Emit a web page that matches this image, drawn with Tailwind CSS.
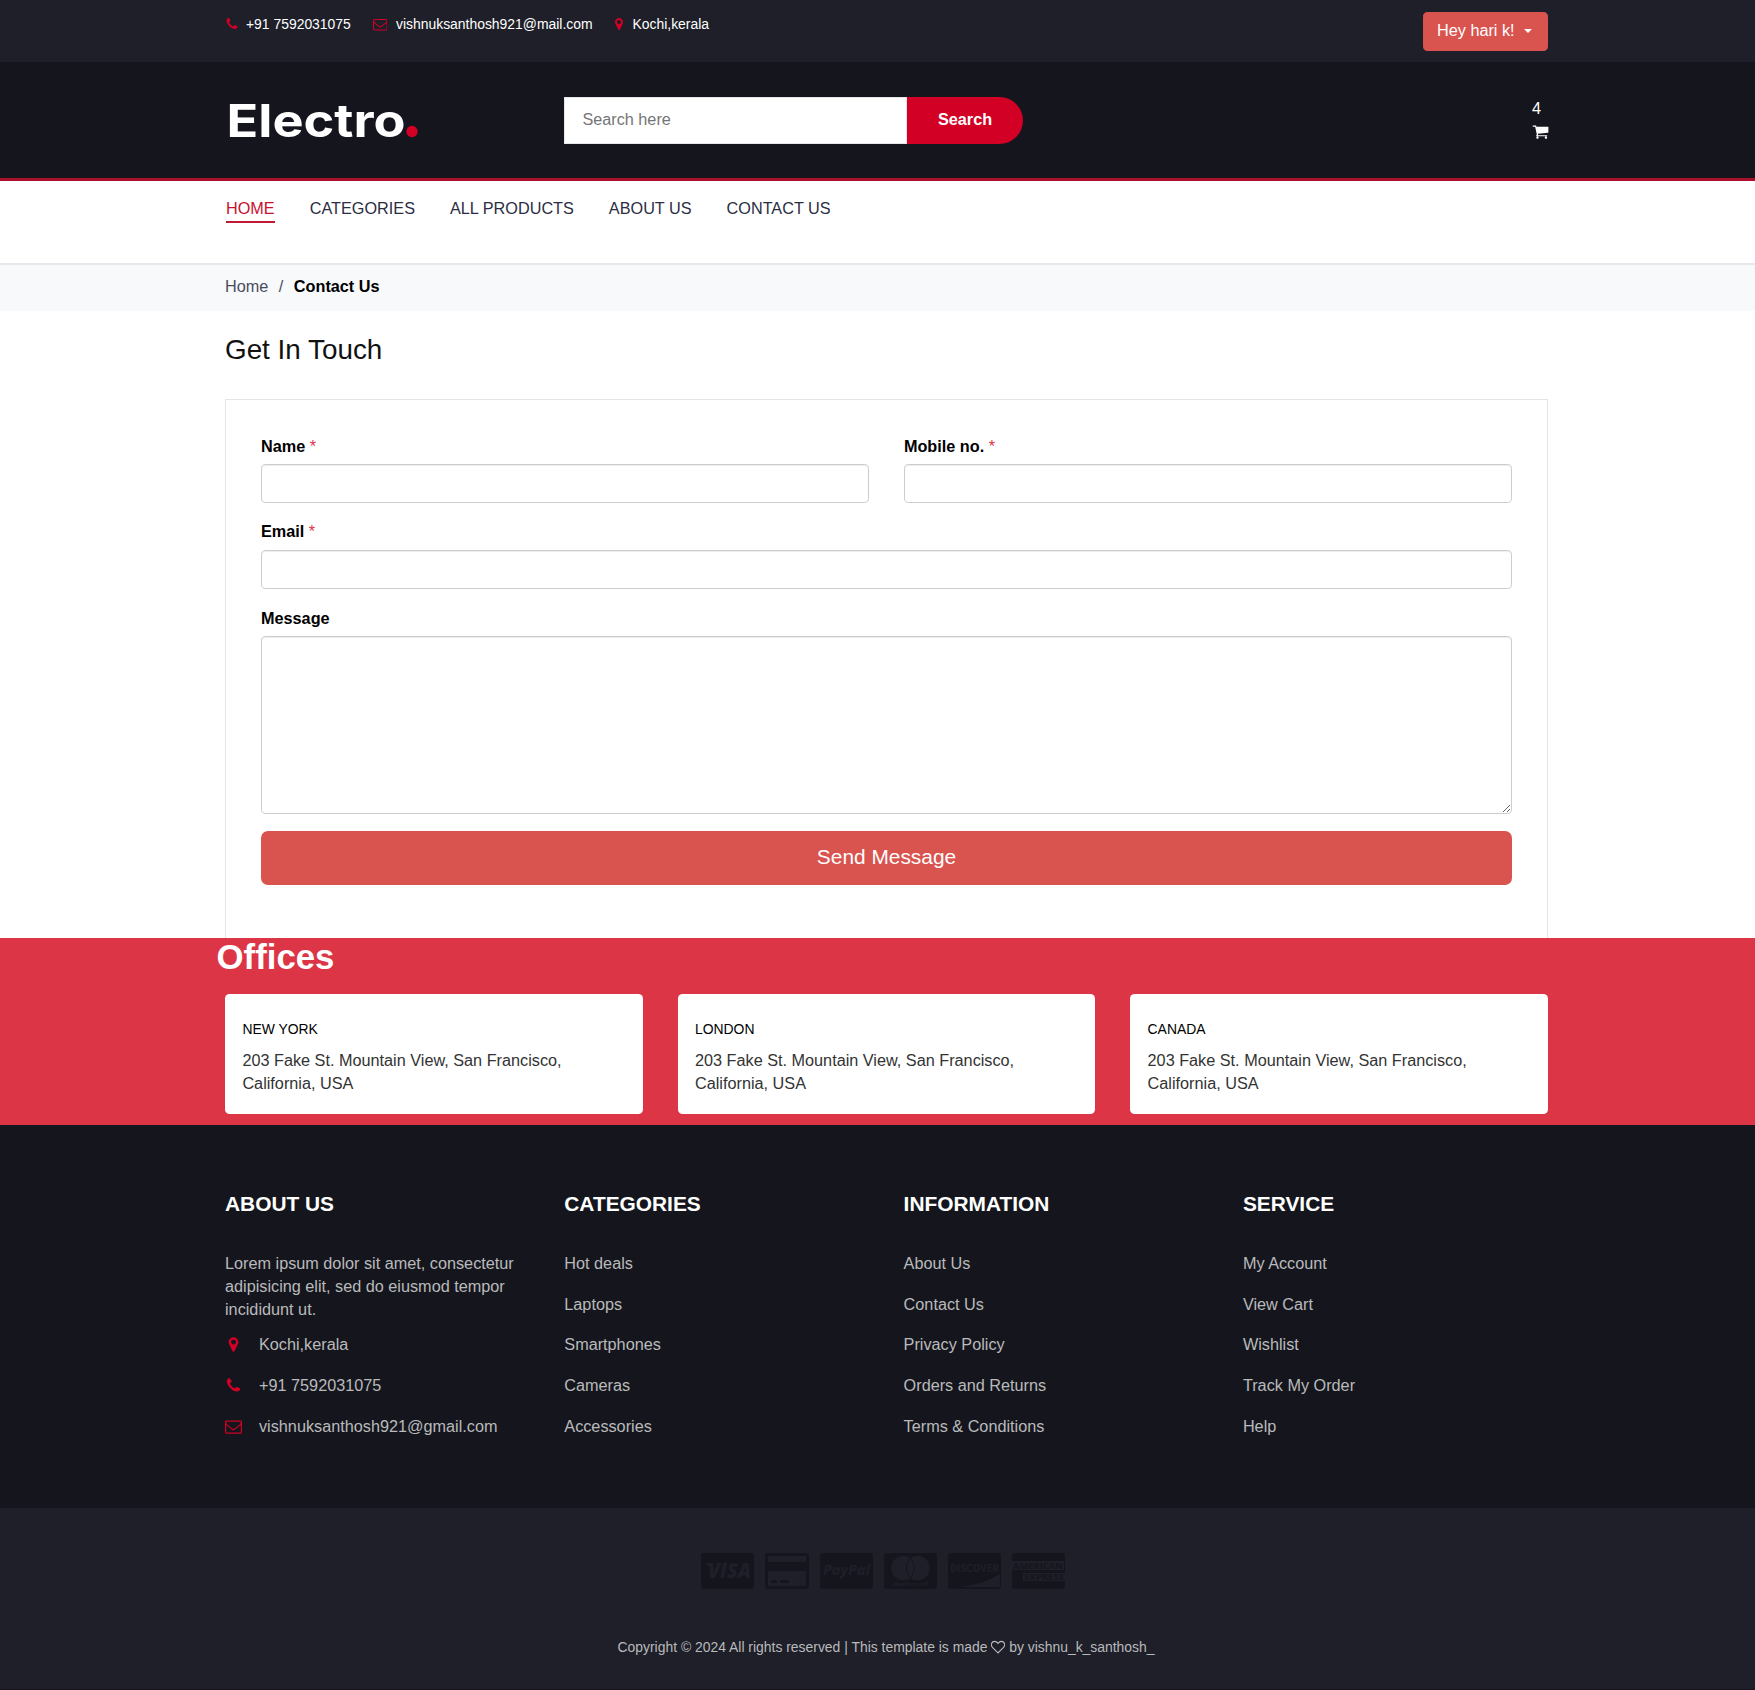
<!DOCTYPE html>
<html lang="en">
<head>
<meta charset="utf-8">
<title>Electro - Contact Us</title>
<script src="https://cdn.jsdelivr.net/npm/@tailwindcss/browser@4"></script>
</head>
<body class="bg-white font-['Liberation_Sans',Arial,sans-serif] text-[16.240px] leading-[23px] text-[#333] w-[1755px] h-[1690px] overflow-hidden">
<svg class="hidden">
  <symbol id="phone" viewBox="0 0 1792 1792"><path d="M1600 1240q0 27-10 70.5t-21 68.5q-21 50-122 106-94 51-186 51-27 0-53-3.5t-57-12.5-47-14.5-55.5-20.5-49.5-18q-98-35-175-83-127-79-264-216t-216-264q-48-77-83-175-3-9-18-49.5t-20.5-55.5-14.5-47-12.5-57-3.5-53q0-92 51-186 56-101 106-122 25-11 68.5-21t70.5-10q14 0 21 3 18 6 53 76 11 19 30 54t35 63.5 31 53.5q3 4 17.5 25t21.5 35.5 7 28.5q0 20-28.5 50t-62 55-62 53-28.5 46q0 9 5 22.5t8.5 20.5 14 24 11.5 19q76 137 174 235t235 174q2 1 19 11.5t24 14 20.5 8.5 22.5 5q18 0 46-28.5t53-62 55-62 50-28.5q14 0 28.5 7t35.5 21.5 25 17.5q25 15 53.5 31t63.5 35 54 30q70 35 76 53 3 7 3 21z"/></symbol>
  <symbol id="pin" viewBox="0 0 1792 1792"><path d="M1152 640q0-106-75-181t-181-75-181 75-75 181 75 181 181 75 181-75 75-181zm256 0q0 109-33 179l-364 774q-16 33-47.5 52t-67.5 19-67.5-19-46.500-52l-365-774q-33-70-33-179 0-212 150-362t362-150 362 150 150 362z"/></symbol>
  <symbol id="mail" viewBox="0 0 1792 1792"><path d="M1664 1504v-768q-32 36-69 66-268 206-426 338-51 43-83 67t-86.500 48.500-102.500 24.500h-2q-48 0-102.500-24.500t-86.500-48.500-83-67q-158-132-426-338-37-30-69-66v768q0 13 9.500 22.500t22.500 9.500h1472q13 0 22.500-9.500t9.500-22.500zm0-1051v-24.500l-.5-13-3-12.500-5.500-9-9-7.500-14-2.500h-1472q-13 0-22.500 9.500t-9.500 22.500q0 168 147 284 193 152 401 317 6 5 35 29.500t46 37.500 44.500 31.500 50.500 27.500 43 9h2q20 0 43-9t50.500-27.500 44.500-31.500 46-37.500 35-29.500q208-165 401-317 54-43 100.500-115.500t46.500-131.500zm128-37v1088q0 66-47 113t-113 47h-1472q-66 0-113-47t-47-113v-1088q0-66 47-113t113-47h1472q66 0 113 47t47 113z"/></symbol>
  <symbol id="cart" viewBox="0 0 1792 1792"><path d="M704 1536q0 52-38 90t-90 38-90-38-38-90 38-90 90-38 90 38 38 90zm896 0q0 52-38 90t-90 38-90-38-38-90 38-90 90-38 90 38 38 90zm128-1088v512q0 24-16.500 42.500t-40.500 21.500l-1044 122q13 60 13 70 0 16-24 64h920q26 0 45 19t19 45-19 45-45 19h-1024q-26 0-45-19t-19-45q0-11 8-31.500t16-36 21.500-40 15.500-29.500l-177-823h-204q-26 0-45-19t-19-45 19-45 45-19h256q16 0 28.500 6.500t19.500 15.500 13 24.500 8 26 5.500 29.500 4.500 26h1201q26 0 45 19t19 45z"/></symbol>
</svg>

<!-- top bar -->
<div class="h-[62px] bg-[#1e1f29] pl-[225px] pr-[207px] flex justify-between items-start">
  <ul class="flex pt-[14px] text-[13.92px] leading-5 text-white">
    <li class="flex items-center w-[147.500px]"><svg class="w-[14px] h-[14px] mr-[7px] -mt-px fill-[#d10024]"><use href="#phone"/></svg>+91 7592031075</li>
    <li class="flex items-center w-[239px]"><svg class="w-[14.500px] h-[14.500px] mr-[9px] fill-[#d10024]"><use href="#mail"/></svg><span>vishnuksanthosh921@mail.com</span></li>
    <li class="flex items-center"><svg class="w-[14px] h-[14px] mr-[7px] fill-[#d10024]"><use href="#pin"/></svg>Kochi,kerala</li>
  </ul>
  <button class="mt-[12px] w-[125px] h-[39px] rounded-[4.600px] bg-[#d9534f] border border-[#d9534f] text-white flex items-center pl-[13px] pb-[3px]">Hey hari k!<span class="ml-[9px] mt-px border-x-[4.600px] border-x-transparent border-t-[4.600px] border-t-white"></span></button>
</div>

<!-- header -->
<header class="h-[116px] bg-[#15161d] pl-[225px] pr-[206px] flex items-start">
  <a class="w-[339px] pt-[28px]">
    <svg width="200" height="60" viewBox="0 0 200 60"><text x="1.500" y="47" font-family="Inter, sans-serif" font-weight="700" font-size="45.500" fill="#fff" textLength="179" lengthAdjust="spacingAndGlyphs">Electro</text><circle cx="187" cy="41.500" r="5.700" fill="#d10024"/></svg>
  </a>
  <form class="flex pt-[35px]">
    <input class="w-[343px] h-[47px] bg-white border border-[#e4e7ed] px-[17.400px] pb-[2px] placeholder:text-[#757575]" placeholder="Search here">
    <button type="button" class="w-[116px] h-[47px] rounded-r-full bg-[#d10024] text-white font-bold pb-[2px]">Search</button>
  </form>
  <div class="ml-auto pt-[33.500px] text-white w-[17px]">
    <div class="h-[27px] leading-[25px]">4</div>
    <svg class="w-[17px] h-[17px] fill-white"><use href="#cart"/></svg>
  </div>
</header>

<!-- navigation -->
<nav class="h-[84.500px] border-t-[3px] border-[#a8102b] px-[226px] flex gap-[35px] pt-[16px] text-[#2b2d42]">
  <a class="h-[26px] text-[#c8102e] border-b-2 border-[#c01a37]">HOME</a>
  <a>CATEGORIES</a><a>ALL PRODUCTS</a><a>ABOUT US</a><a>CONTACT US</a>
</nav>

<!-- breadcrumb -->
<div class="h-[48.500px] border-t-2 border-[#e6e8ed] bg-[#f7f9fb] px-[225px] pt-[10.500px] flex">
  <span class="text-[#4a4c5c]">Home</span><span class="pl-[10.500px] pr-[10.500px] text-[#4a4c5c]">/</span><span class="font-bold text-black">Contact Us</span>
</div>

<!-- contact form -->
<main class="px-[225px] h-[627px] pr-[207px]">
  <h3 class="pt-[23px] h-[88px] text-[27.840px] leading-[31px] text-[#111]">Get In Touch</h3>
  <form class="h-[540px] border border-[#e3e5e7] p-[35px] pt-[35px]">
    <div class="grid grid-cols-2 gap-x-[34.800px]">
      <label class="block h-[85.400px] font-bold text-black">Name <span class="font-normal text-[#dc3545]">*</span><input class="block mt-[6px] w-full h-[39.400px] rounded-[4.600px] border border-[#ccc] shadow-[inset_0_1px_1px_rgba(0,0,0,0.075)]"></label>
      <label class="block h-[85.400px] font-bold text-black">Mobile no. <span class="font-normal text-[#dc3545]">*</span><input class="block mt-[6px] w-full h-[39.400px] rounded-[4.600px] border border-[#ccc] shadow-[inset_0_1px_1px_rgba(0,0,0,0.075)]"></label>
    </div>
    <label class="block h-[86.600px] font-bold text-black">Email <span class="font-normal text-[#dc3545]">*</span><input class="block mt-[6.200px] w-full h-[39.800px] rounded-[4.600px] border border-[#ccc] shadow-[inset_0_1px_1px_rgba(0,0,0,0.075)]"></label>
    <label class="block font-bold text-black">Message<textarea class="block mt-[6px] w-full h-[178px] rounded-[4.600px] border border-[#ccc] shadow-[inset_0_1px_1px_rgba(0,0,0,0.075)]"></textarea></label>
    <button type="button" class="block mt-[17.500px] w-full h-[53.500px] rounded-[7px] bg-[#d9534f] text-white text-[20.880px] pb-[3px]">Send Message</button>
  </form>
</main>

<!-- offices -->
<section class="h-[186.500px] bg-[#dc3545] pl-[225px] pr-[207px]">
  <h2 class="-ml-[8.500px] h-[55.500px] text-[34.800px] leading-[37px] font-bold text-white">Offices</h2>
  <div class="grid grid-cols-3 gap-[34.800px]">
    <div class="h-[120px] rounded-[4.600px] bg-white px-[17.400px] pt-[27.500px]"><h6 class="text-[13.920px] leading-[16px] h-[27.500px] text-black">NEW YORK</h6><p class="w-[330px]">203 Fake St. Mountain View, San Francisco, California, USA</p></div>
    <div class="h-[120px] rounded-[4.600px] bg-white px-[17.400px] pt-[27.500px]"><h6 class="text-[13.920px] leading-[16px] h-[27.500px] text-black">LONDON</h6><p class="w-[330px]">203 Fake St. Mountain View, San Francisco, California, USA</p></div>
    <div class="h-[120px] rounded-[4.600px] bg-white px-[17.400px] pt-[27.500px]"><h6 class="text-[13.920px] leading-[16px] h-[27.500px] text-black">CANADA</h6><p class="w-[330px]">203 Fake St. Mountain View, San Francisco, California, USA</p></div>
  </div>
</section>

<!-- footer -->
<footer class="h-[383.500px] bg-[#15161d] pl-[225px] pt-[67.500px] grid grid-cols-[repeat(4,339.300px)] text-[#b9babc]">
  <div>
    <h3 class="h-[60px] text-[20.880px] font-bold text-white">ABOUT US</h3>
    <p class="w-[300px] h-[81.400px]">Lorem ipsum dolor sit amet, consectetur adipisicing elit, sed do eiusmod tempor incididunt ut.</p>
    <ul>
      <li class="h-[40.700px] flex items-start"><svg class="w-[17px] h-[17px] mt-[3px] mr-[17px] fill-[#d10024]"><use href="#pin"/></svg>Kochi,kerala</li>
      <li class="h-[40.700px] flex items-start"><svg class="w-[17px] h-[17px] mt-[3px] mr-[17px] fill-[#d10024]"><use href="#phone"/></svg>+91 7592031075</li>
      <li class="h-[40.700px] flex items-start"><svg class="w-[17px] h-[17px] mt-[3px] mr-[17px] fill-[#d10024]"><use href="#mail"/></svg>vishnuksanthosh921@gmail.com</li>
    </ul>
  </div>
  <div>
    <h3 class="h-[60px] text-[20.880px] font-bold text-white">CATEGORIES</h3>
    <ul><li class="h-[40.700px]">Hot deals</li><li class="h-[40.700px]">Laptops</li><li class="h-[40.700px]">Smartphones</li><li class="h-[40.700px]">Cameras</li><li class="h-[40.700px]">Accessories</li></ul>
  </div>
  <div>
    <h3 class="h-[60px] text-[20.880px] font-bold text-white">INFORMATION</h3>
    <ul><li class="h-[40.700px]">About Us</li><li class="h-[40.700px]">Contact Us</li><li class="h-[40.700px]">Privacy Policy</li><li class="h-[40.700px]">Orders and Returns</li><li class="h-[40.700px]">Terms &amp; Conditions</li></ul>
  </div>
  <div>
    <h3 class="h-[60px] text-[20.880px] font-bold text-white">SERVICE</h3>
    <ul><li class="h-[40.700px]">My Account</li><li class="h-[40.700px]">View Cart</li><li class="h-[40.700px]">Wishlist</li><li class="h-[40.700px]">Track My Order</li><li class="h-[40.700px]">Help</li></ul>
  </div>
</footer>

<!-- payment methods and copyright -->
<div class="h-[182px] bg-[#1e1f29] border-b border-[#15161d] pt-[45px]">
  <div class="flex pl-[701px] gap-[10.700px] h-[84px] font-bold">
    <svg width="53.300" height="36" viewBox="0 0 53.300 36"><rect width="53.300" height="36" rx="3" fill="#15161d"/><text x="7" y="25.500" font-family="Open Sans" font-weight="800" font-style="italic" font-size="21" fill="#1e1f29" textLength="43" lengthAdjust="spacingAndGlyphs">VISA</text><path d="M4 10h7l2 7z" fill="#1e1f29"/></svg>
    <svg width="44" height="36" viewBox="0 0 44 36"><rect width="44" height="36" rx="3" fill="#15161d"/><path d="M3 3h38v6H3zM3 18h38v14q0 1-1 1H4q-1 0-1-1z" fill="#1e1f29"/><path d="M6 27h6v3H6zM15 27h9v3h-9z" fill="#15161d"/></svg>
    <svg width="53.300" height="36" viewBox="0 0 53.300 36"><rect width="53.300" height="36" rx="3" fill="#15161d"/><text x="3" y="22" font-family="Open Sans" font-weight="700" font-style="italic" font-size="15" fill="#1e1f29" textLength="47" lengthAdjust="spacingAndGlyphs">PayPal</text></svg>
    <svg width="53.300" height="36" viewBox="0 0 53.300 36"><rect width="53.300" height="36" rx="3" fill="#15161d"/><g fill="#1e1f29"><circle cx="19.500" cy="15" r="12.300"/><circle cx="33.500" cy="15" r="12.300"/></g><path d="M26.500 5q-8 10 0 20q8-10 0-20z" fill="#1e1f29" stroke="#15161d"/><text x="9" y="33" font-family="Open Sans" font-size="5" fill="#1e1f29" textLength="35" lengthAdjust="spacingAndGlyphs">mastercard</text></svg>
    <svg width="53.300" height="36" viewBox="0 0 53.300 36"><rect width="53.300" height="36" rx="3" fill="#15161d"/><text x="2" y="19" font-family="Open Sans" font-weight="700" font-size="10" fill="#1e1f29" textLength="49" lengthAdjust="spacingAndGlyphs">DISCOVER</text><path d="M52 21v13H13Q36 31 52 21z" fill="#1e1f29"/></svg>
    <svg width="53.300" height="36" viewBox="0 0 53.300 36"><rect width="53.300" height="36" rx="3" fill="#15161d"/><path d="M0 8h52v9H0zM11 20h42.300v8H11z" fill="#1e1f29"/><g font-family="Open Sans" font-weight="700" font-size="9" fill="#15161d"><text x="1" y="16" textLength="50" lengthAdjust="spacingAndGlyphs">AMERICAN</text><text x="12" y="27.500" textLength="40" lengthAdjust="spacingAndGlyphs">EXPRESS</text></g></svg>
  </div>
  <p class="pl-[617.500px] flex items-center text-[13.920px] leading-5 text-[#b9babc] whitespace-pre">Copyright © 2024 All rights reserved | This template is made <svg class="w-[14px] h-[14px]" viewBox="0 0 14 14" fill="none" stroke="#b9babc" stroke-width="1.100"><path d="M7 12.900L1.700 7.700C-1 4.800.7 1.400 3.700 1.400C5.500 1.400 6.400 2.700 7 3.400C7.600 2.700 8.500 1.400 10.300 1.400C13.300 1.400 15 4.800 12.300 7.700z"/></svg> by vishnu_k_santhosh_</p>
</div>
</body>
</html>
